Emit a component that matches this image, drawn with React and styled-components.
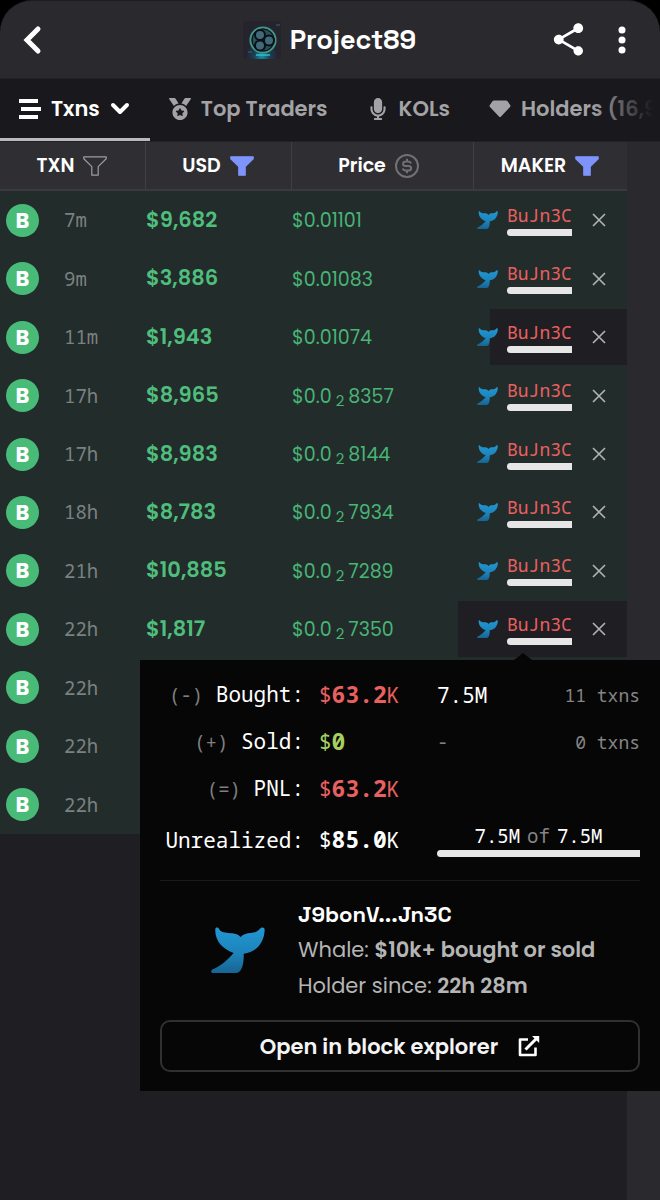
import React, { useState } from 'react'
import styled, { createGlobalStyle } from 'styled-components'
import { MdShare } from 'react-icons/md'
import { FaMedal, FaMicrophone } from 'react-icons/fa'

const sans = '"Poppins", "Inter", sans-serif'
const grotesk = '"Space Grotesk", "Poppins", "Inter", sans-serif'
const mono = '"Noto Sans Mono", "DejaVu Sans Mono", monospace'

const trades = [
	{ age: '7m', usd: '9,682', price: '0.01101' },
	{ age: '9m', usd: '3,886', price: '0.01083' },
	{ age: '11m', usd: '1,943', price: '0.01074', mark: 'half' },
	{ age: '17h', usd: '8,965', price: '0.0', zeros: 2, rest: '8357' },
	{ age: '17h', usd: '8,983', price: '0.0', zeros: 2, rest: '8144' },
	{ age: '18h', usd: '8,783', price: '0.0', zeros: 2, rest: '7934' },
	{ age: '21h', usd: '10,885', price: '0.0', zeros: 2, rest: '7289' },
	{ age: '22h', usd: '1,817', price: '0.0', zeros: 2, rest: '7350', mark: 'full' },
	{ age: '22h' },
	{ age: '22h' },
	{ age: '22h' }
]

const BackIcon = () => (
	<svg width="20" height="30" viewBox="0 0 20 30" fill="none" stroke="#fff" strokeWidth="5" strokeLinecap="round">
		<path d="M16 4 L5 15 L16 26" />
	</svg>
)

const DotsIcon = () => (
	<svg width="8" height="28" viewBox="0 0 8 28" fill="#fff">
		<circle cx="4" cy="4" r="3.5" />
		<circle cx="4" cy="14" r="3.5" />
		<circle cx="4" cy="24" r="3.5" />
	</svg>
)

const ListIcon = () => (
	<svg width="22" height="20" viewBox="0 0 22 20" fill="#fff">
		<path d="M0 0h19v4H0z M2 8h20v4H2z M0 16h19v4H0z" />
	</svg>
)

const ChevronIcon = () => (
	<svg width="20" height="14" viewBox="0 0 20 14" fill="none" stroke="#fff" strokeWidth="4" strokeLinecap="round" strokeLinejoin="round">
		<path d="M3 3 L10 10 L17 3" />
	</svg>
)

const GemIcon = () => (
	<svg width="22" height="18" viewBox="0 0 22 18" fill="currentColor">
		<path d="M5 0.5 H17 Q18 0.5 18.6 1.3 L21.3 5.3 Q21.8 6.2 21 7 L11.8 16.8 Q11 17.6 10.2 16.8 L1 7 Q0.2 6.2 0.7 5.3 L3.4 1.3 Q4 0.5 5 0.5Z" />
	</svg>
)

const FunnelIcon = ({ active }) => (
	<svg width="24" height="20" viewBox="0 0 24 20" fill={active ? '#7e93fb' : 'none'} stroke={active ? '#7e93fb' : '#9d9da2'} strokeWidth="1.2" strokeLinejoin="round">
		<path d="M0.8 0.8 H23.2 V2.8 L15.2 10.6 V19.2 H8.8 V10.6 L0.8 2.8Z" />
	</svg>
)

const DollarIcon = () => (
	<svg width="24" height="24" viewBox="0 0 24 24" fill="none" stroke="#707075" strokeWidth="2">
		<circle cx="12" cy="12" r="11" />
		<path d="M12 4.8V7.4M12 16.6V19.2M16 9.6C15.6 8.2 14.4 7.4 12.8 7.4H11.2C9.4 7.4 8 8.2 8 9.8C8 11.2 9.2 12 10.8 12H13.2C14.9 12 16.2 12.8 16.2 14.2C16.2 15.8 14.8 16.6 13 16.6H11C9.3 16.6 8.1 15.8 7.8 14.4" />
	</svg>
)

const CloseIcon = () => (
	<svg width="14" height="14" viewBox="0 0 14 14" stroke="#aeb0b2" strokeWidth="1.7">
		<path d="M1 1 L13 13 M13 1 L1 13" />
	</svg>
)

const ExternalIcon = () => (
	<svg width="22" height="22" viewBox="0 0 22 22" fill="none" stroke="#fff" strokeWidth="3" strokeLinejoin="round">
		<path d="M10 4.5 H2 V20 H17.5 V12.5" strokeWidth="2.6" />
		<path d="M7.5 14.5 L18.5 3.5" />
		<path d="M14 1 H21.2 V8Z" fill="#fff" stroke="none" />
	</svg>
)

const WhaleIcon = ({ width }) => (
	<svg width={width} viewBox="0 0 162 140" role="img" aria-label="Whale">
		<defs>
			<linearGradient id="tail" x1="0" y1="0" x2="0" y2="1">
				<stop offset="0" stopColor="#2197d3" />
				<stop offset="0.6" stopColor="#1d82b8" />
				<stop offset="1" stopColor="#166493" />
			</linearGradient>
		</defs>
		<path fill="url(#tail)" d="M13 5C15 1 22 0 24 6C28 14 38 17 52 18C68 19 80 20 89 30C98 20 108 19 118 18C132 17 140 13 147 5C151 0 161 0 161 8C160 44 138 76 98 80C99 106 94 128 84 135Q80 138 74 138H6C-1 138 -1 130 5 127C30 117 50 98 68 78C36 67 10 42 13 5Z" />
	</svg>
)

const TokenIcon = () => (
	<svg width="38" height="38" viewBox="0 0 38 38">
		<defs>
			<radialGradient id="glow" cx="0.5" cy="0.92" r="0.42">
				<stop offset="0" stopColor="#1993a8" />
				<stop offset="0.5" stopColor="#1c3f52" />
				<stop offset="1" stopColor="#24232e" />
			</radialGradient>
		</defs>
		<rect width="38" height="38" rx="3" fill="url(#glow)" />
		<circle cx="20" cy="19" r="12.6" fill="#14282f" stroke="#459587" strokeWidth="2" />
		<circle cx="20" cy="19" r="11" stroke="#071116" strokeWidth="1" fill="#2c5058" />
		<g fill="#42697a" stroke="#071116" strokeWidth="2">
			<circle cx="17" cy="14" r="5" />
			<circle cx="17" cy="24.5" r="5" />
			<circle cx="26" cy="19.5" r="5" />
		</g>
		<path d="M13 34H27" stroke="#2bc4dc" strokeWidth="1.4" />
		<path d="M5 31H9M33 4H37" stroke="#286d78" />
	</svg>
)

const MakerPopover = () => (
	<Popover role="dialog" aria-label="Maker details">
		<Stats>
			<colgroup>
				<col style={{ width: 144 }} />
				<col style={{ width: 133 }} />
				<col />
				<col />
			</colgroup>
			<tbody>
				<tr>
					<th scope="row"><Sign>(-)</Sign> Bought:</th>
					<Amount $color="#e8605f">$<b>63.2</b>K</Amount>
					<td>7.5M</td>
					<Count>11 txns</Count>
				</tr>
				<tr>
					<th scope="row"><Sign>(+)</Sign> Sold:</th>
					<Amount $color="#a5cf61">$<b>0</b></Amount>
					<td><Sign>-</Sign></td>
					<Count>0 txns</Count>
				</tr>
				<tr>
					<th scope="row"><Sign>(=)</Sign> PNL:</th>
					<Amount $color="#e8605f">$<b>63.2</b>K</Amount>
					<td />
					<td />
				</tr>
				<tr>
					<th scope="row">Unrealized:</th>
					<Amount $color="#fff">$<b>85.0</b>K</Amount>
					<td colSpan={2}>
						<Held><span>7.5M</span><i>of</i><span>7.5M</span></Held>
						<Bar />
					</td>
				</tr>
			</tbody>
		</Stats>
		<Holder>
			<WhaleIcon width={54} />
			<HolderText>
				<Address>J9bonV...Jn3C</Address>
				<p>Whale: <b>$10k+ bought or sold</b></p>
				<p>Holder since: <b>22h 28m</b></p>
			</HolderText>
		</Holder>
		<Explorer href="#explorer">
			Open in block explorer
			<ExternalIcon />
		</Explorer>
	</Popover>
)

const TradeRow = ({ trade }) => (
	<Row>
		<td>
			<Txn>
				<Badge>B</Badge>
				<Age>{ trade.age }</Age>
			</Txn>
		</td>
		<Usd>{ trade.usd && `$${trade.usd}` }</Usd>
		<Price>
			{ trade.price && `$${trade.price}` }
			{ trade.zeros && <Zeros>{ trade.zeros }</Zeros> }
			{ trade.rest }
		</Price>
		<td>
			{ trade.usd && (
				<Maker $mark={trade.mark}>
					<WhaleIcon width={21} />
					<MakerLink href="#maker">
						BuJn3C
						<Bar />
					</MakerLink>
					<IconButton type="button" aria-label="Clear maker filter"><CloseIcon /></IconButton>
				</Maker>
			) }
			{ trade.mark === 'full' && <MakerPopover /> }
		</td>
	</Row>
)

const tabs = [
	{ id: 'txns', label: 'Txns', icon: <ListIcon /> },
	{ id: 'traders', label: 'Top Traders', icon: <FaMedal size={22} /> },
	{ id: 'kols', label: 'KOLs', icon: <FaMicrophone size={22} /> },
	{ id: 'holders', label: 'Holders (16,9', icon: <GemIcon /> }
]

const App = () => {
	const [tab, setTab] = useState('txns')

	return (
		<Page>
			<GlobalStyle />
			<Header>
				<IconButton type="button" aria-label="Back"><BackIcon /></IconButton>
				<Token>
					<TokenIcon />
					<TokenName>Project89</TokenName>
				</Token>
				<IconButton type="button" aria-label="Share"><MdShare size={39} color="#fff" /></IconButton>
				<IconButton type="button" aria-label="More"><DotsIcon /></IconButton>
			</Header>
			<Tabs role="tablist">
				{ tabs.map(({ id, label, icon }) => (
					<Tab key={id} type="button" role="tab" aria-selected={tab === id} $active={tab === id} onClick={() => setTab(id)}>
						{ icon }
						{ label }
						{ id === 'txns' && <ChevronIcon /> }
					</Tab>
				)) }
			</Tabs>
			<Content>
				<Trades>
					<colgroup>
						<col style={{ width: 146 }} />
						<col style={{ width: 146 }} />
						<col style={{ width: 182 }} />
						<col />
					</colgroup>
					<thead>
						<tr>
							<Heading><Sort type="button">TXN <FunnelIcon /></Sort></Heading>
							<Heading><Sort type="button">USD <FunnelIcon active /></Sort></Heading>
							<Heading><Sort type="button" $inset={8}>Price <DollarIcon /></Sort></Heading>
							<Heading><Sort type="button">MAKER <FunnelIcon active /></Sort></Heading>
						</tr>
					</thead>
					<tbody>
						{ trades.map((trade, i) => <TradeRow key={i} trade={trade} />) }
					</tbody>
				</Trades>
			</Content>
		</Page>
	)
}

export default App

const GlobalStyle = createGlobalStyle`
	* {
		box-sizing: border-box;
	}

	body {
		margin: 0;
		background-color: #000;
		color: #fff;
		font-family: ${sans};
	}

	p {
		margin: 0;
	}

	svg {
		display: block;
		flex-shrink: 0;
	}
`

const Page = styled.div`
	display: flex;
	flex-direction: column;
	min-height: 100vh;
	overflow: hidden;
`

const Header = styled.header`
	display: flex;
	align-items: center;
	gap: 30px;
	height: 79px;
	padding: 0 34px 0 22px;
	border-radius: 32px 32px 0 0;
	border-top: 1px solid #1d1c20;
	border-bottom: 1px solid #222126;
	background-color: #2a292e;
`

const IconButton = styled.button`
	display: flex;
	align-items: center;
	justify-content: center;
	padding: 0;
	border: 0;
	background: none;
	cursor: pointer;
`

const Token = styled.div`
	display: flex;
	align-items: center;
	justify-content: center;
	gap: 9px;
	flex: 1;
	padding-left: 68px;
`

const TokenName = styled.h1`
	margin: 0;
	font-family: ${grotesk};
	font-size: 27px;
	font-weight: 600;
	line-height: 36px;
`

const Tabs = styled.div`
	position: relative;
	display: flex;
	height: 63px;
	background-color: #19181d;
	border-bottom: 1px solid #222126;
	overflow: hidden;

	&::after {
		content: "";
		position: absolute;
		top: 0;
		right: 0;
		bottom: 0;
		width: 68px;
		background: linear-gradient(to right, transparent, #19181d 90%);
		pointer-events: none;
	}
`

const Tab = styled.button`
	display: flex;
	align-items: center;
	gap: 10px;
	flex-shrink: 0;
	padding: 0 20px 0 19px;
	border: 0;
	border-bottom: 3px solid ${p => p.$active ? '#b9b9bb' : 'transparent'};
	background: none;
	color: ${p => p.$active ? '#fff' : '#a3a3a5'};
	font-family: ${sans};
	font-size: 21px;
	font-weight: 600;
	white-space: nowrap;
	cursor: pointer;
`

const Content = styled.main`
	flex: 1;
	padding-right: 33px;
	background: linear-gradient(to left, #2a292e 33px, #1f1e23 33px);
`

const Trades = styled.table`
	width: 100%;
	height: 692px;
	border-collapse: separate;
	border-spacing: 0;
	table-layout: fixed;

	td {
		padding: 0;
	}
`

const Heading = styled.th`
	height: 49px;
	padding: 0;
	border-bottom: 2px solid #3a393d;
	border-right: 1px solid #3f3e43;
	background-color: #2f2e33;

	&:last-child {
		border-right: 0;
	}
`

const Sort = styled.button`
	display: flex;
	align-items: center;
	justify-content: center;
	gap: 9px;
	width: 100%;
	padding: 0 ${p => p.$inset || 1}px 0 0;
	border: 0;
	background: none;
	color: #fff;
	font-family: ${sans};
	font-size: 19px;
	font-weight: 600;
	cursor: pointer;
`

const Row = styled.tr`
	position: relative;
	height: 58px;
	background-color: #222c2b;
`

const Txn = styled.div`
	display: flex;
	align-items: center;
	gap: 25px;
	padding-left: 6px;
`

const Badge = styled.span`
	width: 33px;
	height: 33px;
	border-radius: 50%;
	background-color: #48bb78;
	font-size: 21px;
	font-weight: 700;
	line-height: 33px;
	text-align: center;
`

const Age = styled.span`
	color: #7b8181;
	font-family: ${mono};
	font-size: 19px;
`

const Usd = styled.td`
	&& {
		padding-bottom: 2px;
	}

	color: #4fbe7c;
	font-size: 21px;
	font-weight: 600;
`

const Price = styled.td`
	&& {
		padding-top: 2px;
	}

	color: #48b475;
	font-size: 19px;
	line-height: 28px;
`

const Zeros = styled.sub`
	margin: 0 4px;
	font-size: 15px;
	line-height: 1;
	vertical-align: -3px;
`

const Maker = styled.div`
	display: flex;
	align-items: center;
	height: 56px;
	margin-left: ${p => p.$mark === 'full' ? '-16px' : '0'};
	padding-left: ${p => p.$mark === 'full' ? '19px' : '3px'};
	background: ${p => {
		if (p.$mark === 'full') return '#1f1e23'
		return p.$mark === 'half' ? 'linear-gradient(to right, transparent 16px, #1f1e23 16px)' : 'none'
	}};

	button {
		margin-left: 20px;
	}
`

const MakerLink = styled.a`
	display: flex;
	flex-direction: column;
	gap: 4px;
	margin-left: 9px;
	color: #e8605f;
	font-family: ${mono};
	font-size: 18px;
	line-height: 20px;
	text-decoration: none;
`

const Bar = styled.div`
	height: 7px;
	border-radius: 4px 0 0 4px;
	background-color: #e6e6e6;
`

const Popover = styled.div`
	position: absolute;
	z-index: 2;
	top: 60px;
	left: 140px;
	right: -33px;
	padding: 11px 20px 19px;
	background-color: #060606;

	&::before {
		content: "";
		position: absolute;
		bottom: 100%;
		left: 374px;
		border: 9px solid transparent;
		border-top: 0;
		border-bottom: 7px solid #060606;
	}
`

const Stats = styled.table`
	width: 100%;
	border-collapse: collapse;
	table-layout: fixed;
	color: #fff;
	font-family: ${mono};
	font-size: 21px;
	line-height: 28px;
	white-space: nowrap;

	tr {
		height: 47px;
	}

	tr:last-child {
		height: 55px;
	}

	th {
		padding: 0;
		font-weight: 400;
		text-align: right;
	}
`

const Sign = styled.span`
	color: #7f7f7f;
	font-size: 19px;
`

const Amount = styled.td`
	&& {
		padding-left: 15px;
	}

	color: ${p => p.$color};

	b {
		font-size: 23px;
	}
`

const Count = styled.td`
	color: #858585;
	font-size: 18px;
	text-align: right;
`

const Held = styled.div`
	display: flex;
	justify-content: center;
	gap: 7px;
	font-size: 19px;
	line-height: 27px;

	i {
		color: #858585;
		font-style: normal;
	}
`

const Holder = styled.div`
	display: flex;
	align-items: center;
	gap: 33px;
	margin-top: 13px;
	padding: 15px 0 16px 51px;
	border-top: 1px solid #1a1a1a;
`

const HolderText = styled.div`
	color: #b5b5b5;
	font-size: 21px;
	line-height: 36px;
	white-space: nowrap;

	b {
		font-weight: 600;
	}
`

const Address = styled.p`
	color: #fff;
	font-family: ${grotesk};
	font-size: 22px;
	font-weight: 700;
`

const Explorer = styled.a`
	display: flex;
	align-items: center;
	justify-content: center;
	gap: 20px;
	height: 52px;
	border: 2px solid #303030;
	border-radius: 10px;
	color: #f4f4f4;
	font-size: 21px;
	font-weight: 600;
	text-decoration: none;
`
